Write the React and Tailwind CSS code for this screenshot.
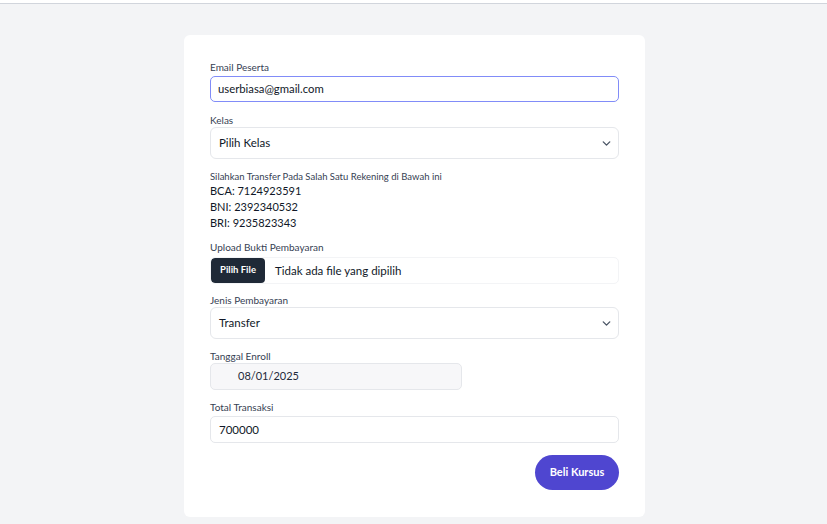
import { ChevronDown } from 'lucide-react'

const Label = ({ children, mb = 'mb-[2px]' }) => (
  <label className={`block text-[10px] text-gray-700 leading-[12px] ${mb}`}>{children}</label>
)

const SelectBox = ({ text }) => (
  <div className="flex items-center justify-between h-[32px] border border-gray-200 rounded-[6px] pl-[8px] pr-[5px] bg-white">
    <span className="text-[11.5px] text-gray-900">{text}</span>
    <ChevronDown size={13} strokeWidth={2.5} className="text-gray-600" />
  </div>
)

export default function App() {
  return (
    <div className="min-h-[524px] bg-[#f3f4f6]" style={{ fontFamily: 'Lato, "Noto Sans", sans-serif' }}>
      <div className="h-[4px] bg-white border-b border-gray-300"></div>
      <div className="flex justify-center pt-[31px] pb-[7px]">
        <div className="w-[461px] ml-[2px] bg-white rounded-[6px] px-[26px] pt-[26px] pb-[27px]">
          <Label mb="mb-[3px]">Email Peserta</Label>
          <div className="flex items-center h-[26px] border-[1.5px] border-[#818cf8] rounded-[5px] px-[7px] text-[11.3px] text-gray-900">
            userbiasa@gmail.com
          </div>

          <div className="mt-[12px]">
            <Label mb="mb-[1px]">Kelas</Label>
            <SelectBox text="Pilih Kelas" />
          </div>

          <div className="mt-[12px]">
            <p className="text-[9.5px] text-gray-700 leading-[12px]">Silahkan Transfer Pada Salah Satu Rekening di Bawah ini</p>
            <p className="text-[11px] text-gray-900 leading-[16px]">BCA: 7124923591</p>
            <p className="text-[11px] text-gray-900 leading-[16px]">BNI: 2392340532</p>
            <p className="text-[11px] text-gray-900 leading-[16px]">BRI: 9235823343</p>
          </div>

          <div className="mt-[10px]">
            <Label mb="mb-[4px]">Upload Bukti Pembayaran</Label>
            <div className="flex items-center h-[27px] border border-gray-100 rounded-[5px] overflow-hidden">
              <div className="h-full w-[54px] bg-[#1f2937] text-white text-[9.5px] font-bold flex items-center justify-center rounded-[4px]">Pilih File</div>
              <span className="ml-[10px] text-[11.5px] text-gray-900">Tidak ada file yang dipilih</span>
            </div>
          </div>

          <div className="mt-[10px]">
            <Label mb="mb-[1px]">Jenis Pembayaran</Label>
            <SelectBox text="Transfer" />
          </div>

          <div className="mt-[11px]">
            <Label mb="mb-[1px]">Tanggal Enroll</Label>
            <div className="flex items-center h-[27px] w-[252px] border border-gray-200 bg-gray-100/70 rounded-[5px] pl-[27px] text-[11px] text-gray-800">
              08/01/2025
            </div>
          </div>

          <div className="mt-[11px]">
            <Label mb="mb-[3px]">Total Transaksi</Label>
            <div className="flex items-center h-[27px] border border-gray-200 rounded-[5px] px-[8px] text-[11.5px] text-gray-900">
              700000
            </div>
          </div>

          <div className="flex justify-end mt-[12px]">
            <button className="h-[35px] w-[84px] rounded-full bg-[#4f46d0] text-white text-[11px] font-bold">Beli Kursus</button>
          </div>
        </div>
      </div>
    </div>
  )
}
